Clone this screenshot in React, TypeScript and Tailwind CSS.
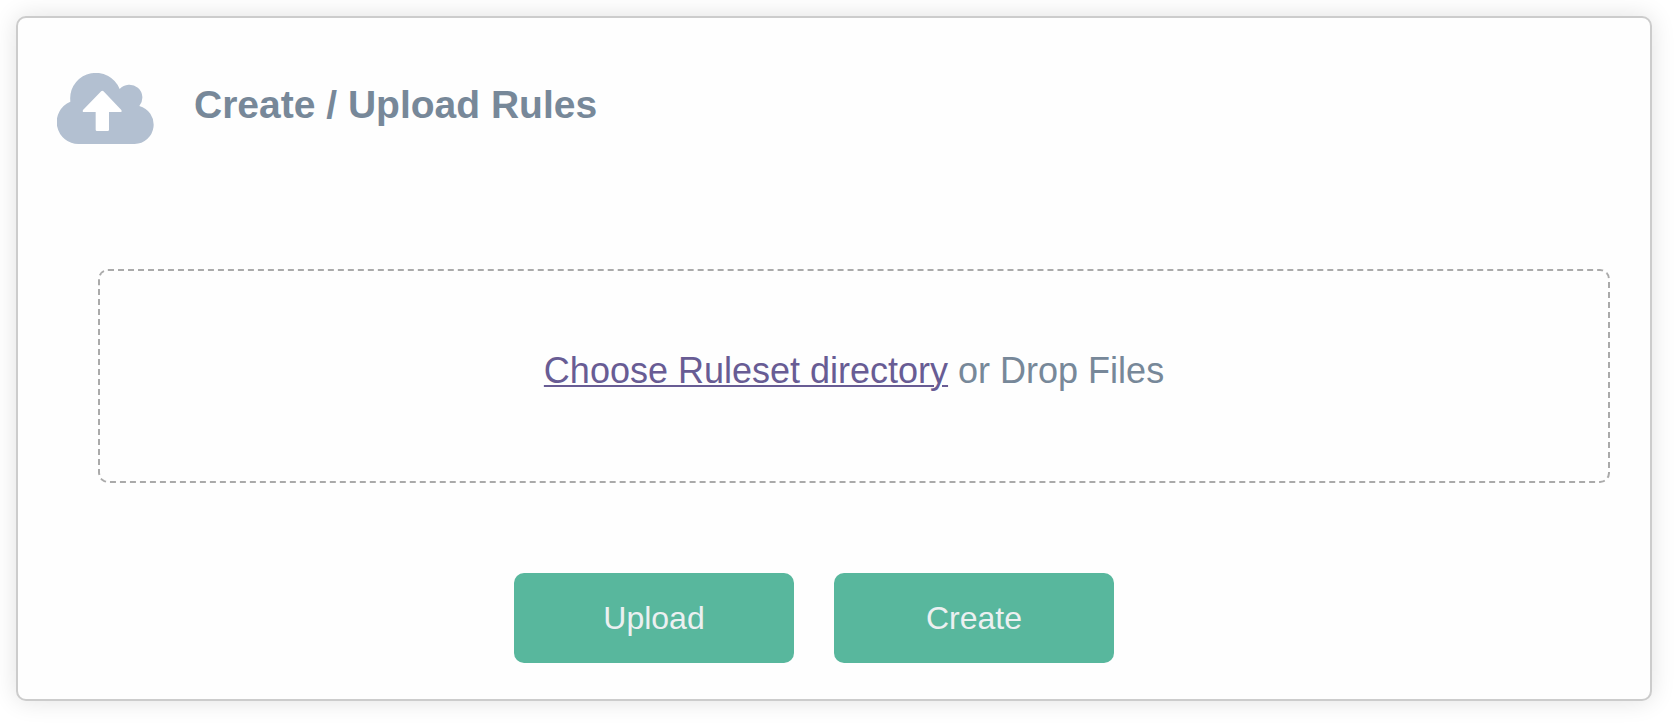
import type { ReactNode } from "react";

function CloudUploadIcon() {
  return (
    <svg viewBox="0 0 291 213" className="h-[71px] w-[97px] shrink-0" aria-hidden="true">
      <path
        fill="#b3c0d1"
        d="M66 213A66 66 0 0 1 40 86L39.500 76A77 77 0 0 1 188 48A39 39 0 0 1 247 99A58 58 0 0 1 233 213Z"
      />
      <path
        fill="#ffffff"
        d="M132.500 55Q136 52 139.500 55L193 111Q196 117 190 117H156V170Q156 174 152 174H120Q116 174 116 170V117H81Q75 117 78 111Z"
      />
    </svg>
  );
}

function ActionButton({ children }: { children: ReactNode }) {
  return (
    <button
      type="button"
      className="h-[90px] w-[280px] rounded-[10px] bg-[#58b79d] text-[32px] leading-10 text-[#ecf0f1]"
    >
      {children}
    </button>
  );
}

export default function App() {
  return (
    <main className="min-h-screen bg-white py-4 pr-[26px] pl-4 font-['Liberation_Sans',Arial,sans-serif] text-[#778899]">
      <section className="rounded-[10px] border-2 border-[#cccccc] bg-[#fefefe] pt-[55px] pr-10 pb-9 shadow-[0_0_24px_rgba(0,0,0,0.12)]">
        <header className="flex items-start gap-10 pl-[39px]">
          <CloudUploadIcon />
          <h1 className="pt-2 text-[39px] leading-12 font-bold">Create / Upload Rules</h1>
        </header>
        <div className="mt-[125px] ml-20 flex h-[214px] items-center justify-center rounded-[10px] border-2 border-dashed border-[#aaaaaa] pb-2.5">
          <p className="text-4xl">
            <a href="#ruleset" className="text-[#685c94] underline decoration-2 underline-offset-2">
              Choose Ruleset directory
            </a>{" "}
            or Drop Files
          </p>
        </div>
        <div className="mt-[90px] flex justify-center gap-10">
          <ActionButton>Upload</ActionButton>
          <ActionButton>Create</ActionButton>
        </div>
      </section>
    </main>
  );
}
